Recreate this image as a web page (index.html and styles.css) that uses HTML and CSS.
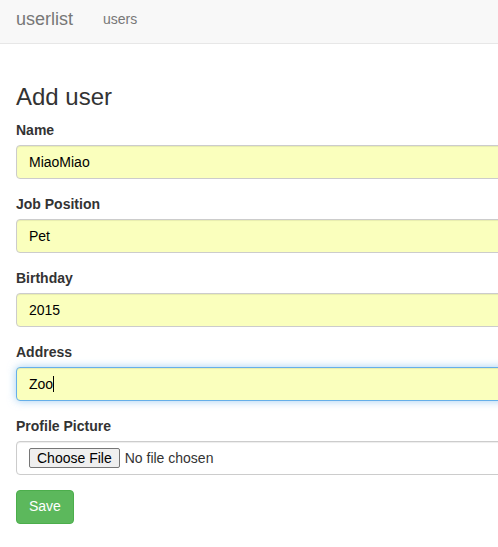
FILE: index.html
```html
<!DOCTYPE html>
<html>
<head>
<meta charset="utf-8">
<title>userlist</title>
<link rel="stylesheet" href="styles.css">
</head>
<body>
<nav class="navbar">
  <a class="brand" href="#">userlist</a>
  <a class="nav-link" href="#">users</a>
</nav>
<main class="page">
  <h3 class="title">Add user</h3>
  <form class="form">
    <div class="group">
      <label class="label">Name</label>
      <input class="control autofill" type="text" value="MiaoMiao">
    </div>
    <div class="group">
      <label class="label">Job Position</label>
      <input class="control autofill" type="text" value="Pet">
    </div>
    <div class="group">
      <label class="label">Birthday</label>
      <input class="control autofill" type="text" value="2015">
    </div>
    <div class="group">
      <label class="label">Address</label>
      <div class="field-wrap">
        <input class="control autofill focused" type="text" value="Zoo">
        <span class="caret"></span>
      </div>
    </div>
    <div class="group">
      <label class="label">Profile Picture</label>
      <input class="control file" type="file">
    </div>
    <button class="btn-save" type="button">Save</button>
  </form>
</main>
</body>
</html>
```
FILE: styles.css
```css
html, body {
  margin: 0;
  padding: 0;
  overflow: hidden;
  background: #fff;
}
body {
  font-family: "Liberation Sans", Arial, sans-serif;
  font-size: 14px;
  line-height: 1.42857;
  color: #333;
}
.navbar {
  height: 43px;
  background: #f8f8f8;
  border-bottom: 1px solid #e7e7e7;
  display: flex;
  align-items: center;
  padding-left: 16px;
  margin-bottom: 20px;
}
.brand {
  font-size: 18px;
  line-height: 20px;
  color: #777;
  text-decoration: none;
  margin-top: -6px;
}
.nav-link {
  font-size: 14px;
  line-height: 20px;
  color: #777;
  text-decoration: none;
  margin-left: 30px;
  margin-top: -6px;
}
.page {
  display: flow-root;
  padding-left: 16px;
  width: 720px;
}
.title {
  font-size: 24px;
  font-weight: 500;
  line-height: 1.1;
  margin: 20px 0 10px;
  color: #333;
}
.form {
  margin: 0;
}
.group {
  margin-bottom: 15px;
}
.label {
  display: inline-block;
  font-weight: bold;
  margin-bottom: 5px;
  line-height: 20px;
}
.control {
  display: block;
  box-sizing: border-box;
  width: 100%;
  height: 34px;
  padding: 6px 12px;
  font-family: "Liberation Sans", Arial, sans-serif;
  font-size: 14px;
  line-height: 1.42857;
  color: #555;
  background: #fff;
  border: 1px solid #ccc;
  border-radius: 4px;
  box-shadow: inset 0 1px 1px rgba(0,0,0,.075);
  margin: 0;
  outline: none;
}
.autofill {
  background: #faffbd;
  color: #000;
}
.focused {
  border-color: #66afe9;
  box-shadow: inset 0 1px 1px rgba(0,0,0,.075), 0 0 8px rgba(102,175,233,.6);
}
.field-wrap {
  position: relative;
}
.caret {
  position: absolute;
  left: 37px;
  top: 9px;
  width: 1px;
  height: 16px;
  background: #000;
}
.file {
  padding-top: 6px;
  color: #333;
}
.file::file-selector-button {
  font-family: "Liberation Sans", Arial, sans-serif;
  font-size: 14px;
  background: #efefef;
  border: 1px solid #767676;
  border-radius: 2px;
  padding: 1px 7px;
  margin-right: 5px;
  color: #000;
}
.btn-save {
  display: block;
  font-family: "Liberation Sans", Arial, sans-serif;
  font-size: 14px;
  line-height: 1.42857;
  padding: 6px 12px;
  color: #fff;
  background: #5cb85c;
  border: 1px solid #4cae4c;
  border-radius: 4px;
  cursor: pointer;
}
```
